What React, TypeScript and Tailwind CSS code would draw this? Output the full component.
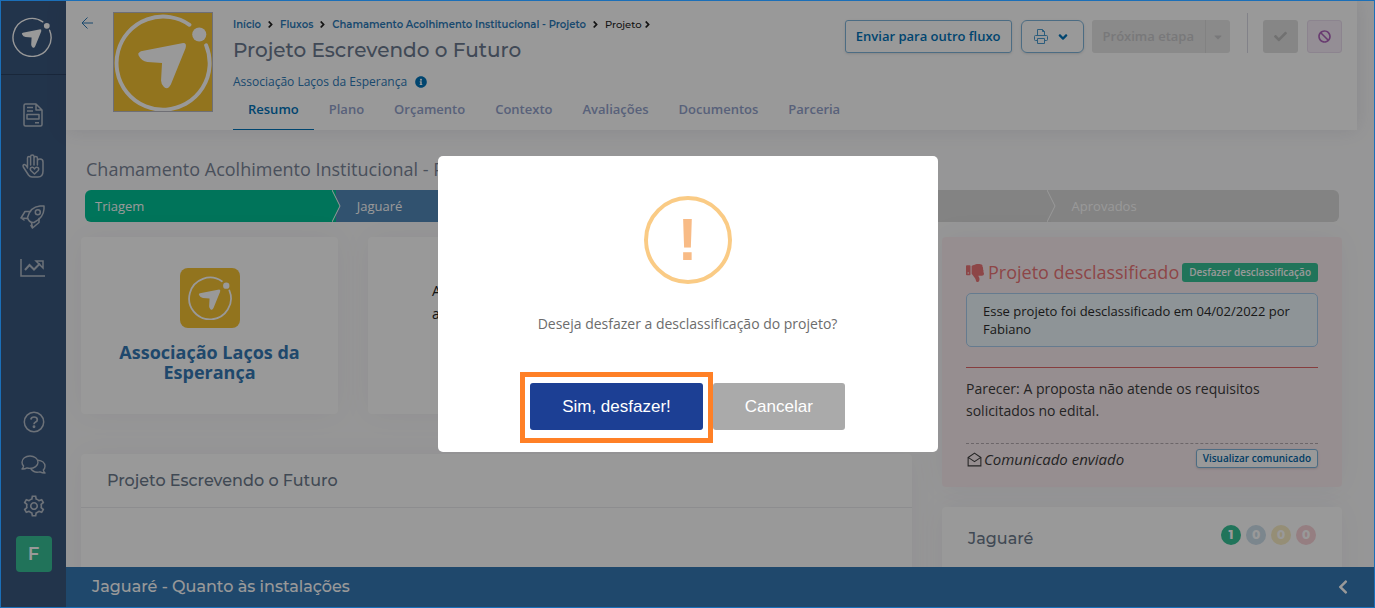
import { FaAngleDown, FaAngleRight, FaBan, FaCaretDown, FaCheck, FaChevronLeft, FaInfoCircle, FaThumbsDown } from "react-icons/fa"
import { LiaCogSolid, LiaEnvelopeOpen } from "react-icons/lia"

const montserrat = "font-['Montserrat','Inter',sans-serif]"

const tabs = ["Resumo", "Plano", "Orçamento", "Contexto", "Avaliações", "Documentos", "Parceria"]

const counters = [
  { value: 1, color: "bg-[#36c196]" },
  { value: 0, color: "bg-[#cddfec]" },
  { value: 0, color: "bg-[#f8edc5]" },
  { value: 0, color: "bg-[#f9d2d8]" },
]

function Logo({ className, thin }: { className: string; thin?: boolean }) {
  return (
    <svg viewBox="0 0 100 100" className={className} fill="none" aria-hidden="true">
      <path
        d="M77 12A47.500 47.500 0 1 0 94 33"
        stroke="currentColor"
        strokeWidth={thin ? 3.500 : 4}
        strokeLinecap="round"
      />
      <circle cx="87" cy="22" r="7.200" fill="currentColor" />
      <path
        d="M26 40Q27 39 30 38.500L68 31Q75 29 73 36L58 73Q55 79 51 75.500Q48 73 48 69L49 51L34 50Q28 49 25 43Q24 41 26 40Z"
        fill="currentColor"
      />
    </svg>
  )
}

function DocumentIcon() {
  return (
    <svg width="20" height="24" viewBox="0 0 20 24" fill="none" stroke="currentColor" strokeWidth="1.500" strokeLinejoin="round" aria-hidden="true">
      <path d="M1 2.500Q1 1 2.500 1H13L19 7V21.500Q19 23 17.500 23H2.500Q1 23 1 21.500ZM13 1V7H19" />
      <path d="M4 4.500H10M4 8H10M4 11.500H16V16H4ZM12 19.800H16" />
    </svg>
  )
}

function HandIcon() {
  return (
    <svg width="22" height="24" viewBox="0 0 22 24" fill="none" stroke="currentColor" strokeWidth="1.500" strokeLinejoin="round" strokeLinecap="round" aria-hidden="true">
      <path d="M5.500 14V4Q5.500 2.500 7 2.500T8.600 4V11M8.600 4V2.500Q8.600 1 10.300 1T12 2.500V11M12 4Q12 2.500 13.700 2.500T15.400 4V11M15.400 7Q15.400 5 18 5Q21 5 21 8V17Q21 23 16 23H10Q8 23 6.500 21L1.300 13Q.5 11 2.200 10.500Q3.500 10.200 5.500 13.500" />
      <path d="M12.500 20L8.800 16.500Q7.500 14.500 9.300 13.500Q11.300 12.700 12.500 15Q13.700 12.700 15.700 13.500Q17.500 14.500 16.200 16.500Z" />
    </svg>
  )
}

function RocketIcon() {
  return (
    <svg width="25" height="24" viewBox="0 0 25 24" fill="none" stroke="currentColor" strokeWidth="1.500" strokeLinejoin="round" strokeLinecap="round" aria-hidden="true">
      <path d="M7.500 12.500Q10 2 20 1H24V4Q23.500 13 14 17.500Q9 18 7.500 12.500Z" />
      <path d="M10.500 6.500H5L1 13L7.500 13.500M19 13.500V17.500L12.500 23L11.500 17.500M1 13L4 15M12.500 23L11 20.500" />
      <circle cx="17.800" cy="7.200" r="2.500" />
    </svg>
  )
}

function ChartIcon() {
  return (
    <svg width="25" height="18" viewBox="0 0 25 18" fill="none" stroke="currentColor" strokeWidth="1.500" aria-hidden="true">
      <path d="M1 0V17H25" />
      <path d="M5 11L9.500 6L14 10.500L20 4.500" strokeWidth="2" />
      <path d="M16 2H23V9L20 6L18 4Z" />
    </svg>
  )
}

function HelpIcon() {
  return (
    <svg width="22" height="22" viewBox="0 0 22 22" fill="none" stroke="currentColor" strokeWidth="1.500" aria-hidden="true">
      <circle cx="11" cy="11" r="9.700" />
      <path d="M7.800 8.500Q8.300 6 11 6Q14.300 6 14.300 8.700Q14.300 10.300 12.300 11.200Q11 11.800 11 13.300" strokeWidth="1.700" />
      <circle cx="11" cy="15.700" r=".7" fill="currentColor" />
    </svg>
  )
}

function ChatIcon() {
  return (
    <svg width="25" height="19" viewBox="0 0 25 19" fill="none" stroke="currentColor" strokeWidth="1.400" strokeLinejoin="round" strokeLinecap="round" aria-hidden="true">
      <path d="M1 14Q2.500 12.500 2.600 11Q1 9.500 1 7.200C1 3.700 4.600 1 9 1S17 3.700 17 7.200S13.400 13.400 9 13.400Q7.300 13.400 6 12.900Q3.800 14.200 1 14Z" />
      <path d="M17 5.200C21 5.500 24 8 24 11.200Q24 13.500 22.300 15Q22.500 16.500 24 18Q21.200 18 19 16.800Q13 18.500 9.700 13.500" />
    </svg>
  )
}

function PrinterIcon() {
  return (
    <svg width="14" height="15" viewBox="0 0 14 15" fill="none" stroke="currentColor" strokeWidth="1" aria-hidden="true">
      <path d="M3.500 6.500V.5H8.500L10.500 2.500V6.500M8.500 .5V2.500H10.500" />
      <path d="M3 11.500H1.500Q.5 11.500 .5 10.500V7.500Q.5 6.500 1.500 6.500H12.500Q13.500 6.500 13.500 7.500V10.500Q13.500 11.500 12.500 11.500H11M3.500 9.500H10.500V14.500H3.500Z" />
    </svg>
  )
}

function ArrowLeftIcon() {
  return (
    <svg width="12" height="12" viewBox="0 0 12 12" fill="none" stroke="currentColor" strokeWidth="1" aria-hidden="true">
      <path d="M6.500 .5L1 6L6.500 11.500M1 6H12" />
    </svg>
  )
}

function StepArrow({ color }: { color: string }) {
  return (
    <svg width="9" height="32" viewBox="0 0 9 32" className={"absolute -left-1 top-0 " + color} aria-hidden="true">
      <path d="M0 0L8 16L0 32Z" fill="currentColor" />
      <path d="M0 0L8 16L0 32" fill="none" stroke="#fff" />
    </svg>
  )
}

function Sidebar() {
  return (
    <aside className="flex w-[65px] shrink-0 flex-col items-center bg-[#3a577d] text-[#b4bdc9]">
      <a href="#inicio" aria-label="Início" className="flex h-[74px] w-full items-center justify-center border-b border-[#2a4162] pb-[2px] pr-1 text-white">
        <Logo thin className="size-10" />
      </a>
      <nav className="flex flex-col items-center gap-[27px] pr-[2px] pt-[28px]">
        <a href="#editais" aria-label="Editais" className="flex h-6 items-center"><DocumentIcon /></a>
        <a href="#doacoes" aria-label="Doações" className="flex h-6 items-center"><HandIcon /></a>
        <a href="#projetos" aria-label="Projetos" className="flex h-6 items-center"><RocketIcon /></a>
        <a href="#indicadores" aria-label="Indicadores" className="flex h-6 items-center"><ChartIcon /></a>
      </nav>
      <div className="mt-auto flex flex-col items-center gap-[18px] pb-9">
        <a href="#ajuda" aria-label="Ajuda" className="flex h-6 items-center"><HelpIcon /></a>
        <a href="#mensagens" aria-label="Mensagens" className="flex h-6 items-center"><ChatIcon /></a>
        <a href="#ajustes" aria-label="Ajustes" className="flex h-6 items-center"><LiaCogSolid size={26} /></a>
        <button className={"size-9 rounded bg-[#38c096] text-lg font-semibold text-white " + montserrat}>F</button>
      </div>
    </aside>
  )
}

function Breadcrumb() {
  return (
    <nav className={"flex h-4 items-center gap-1 text-[10px] font-semibold text-[#2c7ab8] " + montserrat}>
      <a href="#inicio">Início</a>
      <FaAngleRight size={11} className="text-[#222]" />
      <a href="#fluxos">Fluxos</a>
      <FaAngleRight size={11} className="text-[#222]" />
      <a href="#chamamento">Chamamento Acolhimento Institucional - Projeto</a>
      <FaAngleRight size={11} className="text-[#222]" />
      <span className="flex items-center font-medium text-[#222]">
        Projeto <FaAngleRight size={11} />
      </span>
    </nav>
  )
}

function Header() {
  return (
    <header className="mr-[18px] flex h-[129px] shrink-0 bg-white px-[15px] shadow-[0_0_20px_rgba(60,60,90,0.12)]">
      <a href="#voltar" aria-label="Voltar" className="mt-4 h-3 shrink-0 text-[#2c7ab8]">
        <ArrowLeftIcon />
      </a>
      <div className="ml-5 mt-[11px] size-[100px] shrink-0 border border-[#b9b9c4] bg-[#f4c133] text-white">
        <Logo className="size-full" />
      </div>
      <div className="ml-5 flex min-w-0 flex-1 flex-col whitespace-nowrap pt-[15px]">
        <Breadcrumb />
        <h1 className={"mt-1 text-xl leading-[28px] font-medium text-[#6c7a90] " + montserrat}>Projeto Escrevendo o Futuro</h1>
        <p className="mt-2 flex items-center gap-2 text-xs leading-[20px] text-[#2c7ab8]">
          <a href="#associacao">Associação Laços da Esperança</a>
          <FaInfoCircle size={12} className="text-[#0073ba]" />
        </p>
        <nav className="mt-auto flex">
          {tabs.map((tab, i) => (
            <a
              key={tab}
              href={"#" + tab.toLowerCase()}
              className={
                i === 0
                  ? "h-[38px] border-b border-[#0073ba] px-[15px] pt-2 text-[13px] font-semibold text-[#0073ba]"
                  : "h-[38px] px-[15px] pt-2 text-[13px] font-semibold text-[#93a2cc]"
              }
            >
              {tab}
            </a>
          ))}
        </nav>
      </div>
      <div className="mt-[19px] flex h-[33px] shrink-0 items-center whitespace-nowrap text-[13px] font-semibold">
        <button className="h-full rounded-[3px] border border-[#7fb5da] px-[10px] text-[#0073ba] shadow-sm">Enviar para outro fluxo</button>
        <button aria-label="Imprimir" className="ml-[9px] flex h-full w-[63px] items-center justify-center gap-2 rounded-md border border-[#7fb5da] text-[#0073ba] shadow-sm">
          <span className="text-[#4a9bd0]"><PrinterIcon /></span>
          <FaAngleDown size={14} />
        </button>
        <button disabled className="ml-2 h-full rounded-l-[3px] bg-[#e6e6e6] px-[11px] text-[#c9c9cb]">Próxima etapa</button>
        <button disabled aria-label="Mais etapas" className="flex h-full w-[25px] items-center justify-center rounded-r-[3px] border-l border-[#d9d9d9] bg-[#e6e6e6] text-[#c9c9cb]">
          <FaCaretDown size={12} />
        </button>
        <div className="mb-2 ml-[17px] mr-[15px] h-10 border-l border-[#d9d9e4]" />
        <button disabled aria-label="Aprovar" className="flex h-full w-[35px] items-center justify-center rounded-[3px] bg-[#e0e0e0] text-[#bdbdbd]">
          <FaCheck size={13} />
        </button>
        <button aria-label="Desclassificar" className="ml-[9px] flex h-full w-[35px] items-center justify-center rounded-[3px] border border-[#eaddee] bg-[#f7edf8] text-[#b065bd]">
          <FaBan size={13} />
        </button>
      </div>
    </header>
  )
}

function Steps() {
  return (
    <ol className="flex h-8 overflow-hidden rounded-md text-[13px] leading-[32px] text-white">
      <li className="w-1/5 bg-[#00c196] pl-[10px]">Triagem</li>
      <li className="relative flex-1 bg-[#5389b9] pl-[21px]">
        <StepArrow color="text-[#00c196]" />
        Jaguaré
      </li>
      <li className="flex-1 bg-[#dadada]" />
      <li className="relative w-[23%] bg-[#dadada] pl-[21px]">
        <StepArrow color="text-[#dadada]" />
        Aprovados
      </li>
    </ol>
  )
}

const card = "rounded bg-white shadow-[0_0_30px_rgba(82,63,105,0.06)]"

function Disqualified() {
  return (
    <section className="rounded bg-[#fbedf1] px-6 pb-4 pt-6 shadow-[0_0_30px_rgba(82,63,105,0.06)]">
      <div className="flex h-[23px] items-center justify-between whitespace-nowrap">
        <h3 className="flex items-center gap-1 text-[18px] text-[#ec7577]">
          <FaThumbsDown size={18} />
          Projeto desclassificado
        </h3>
        <button className="h-[19px] rounded-[3px] bg-[#36c196] px-[7px] text-[10px] font-semibold leading-[19px] text-white">
          Desfazer desclassificação
        </button>
      </div>
      <p className="mt-[9px] rounded-[5px] border border-[#a9cdee] bg-[#edf7fc] px-4 py-2 text-[13px] leading-[18px] text-[#2b2b2b]">
        Esse projeto foi desclassificado em 04/02/2022 por Fabiano
      </p>
      <hr className="mt-5 border-[#e06668]" />
      <p className="mt-[10px] text-sm leading-[22px] text-[#3c3c3c]">
        Parecer: A proposta não atende os requisitos solicitados no edital.
      </p>
      <div className="mt-[21px] flex h-[28px] items-start justify-between border-t border-dashed border-[#b5abb0] pt-[5px] text-[#3c3c3c]">
        <span className="flex items-center gap-px text-[15px] italic leading-[20px]">
          <LiaEnvelopeOpen size={17} className="stroke-current" />
          Comunicado enviado
        </span>
        <button className="h-[19px] rounded-[3px] border border-[#7fb5da] bg-white px-[6px] text-[10px] font-semibold leading-[17px] text-[#0065a8] shadow-sm">
          Visualizar comunicado
        </button>
      </div>
    </section>
  )
}

function ConfirmDialog() {
  return (
    <div className="fixed inset-0 flex items-center justify-center bg-black/40">
      <div role="dialog" aria-modal="true" className="flex h-[296px] w-[500px] flex-col items-center rounded-[5px] bg-white pt-10">
        <div className="flex size-[88px] items-center justify-center rounded-full border-4 border-[#facb85] font-['Liberation_Sans',Arial,sans-serif] text-[60px] font-bold leading-[80px] text-[#f8bb86]">!</div>
        <p className="mt-[29px] text-sm leading-[22px] text-[#6c6c6c]">Deseja desfazer a desclassificação do projeto?</p>
        <div className="mt-12 flex gap-[10px] font-['Liberation_Sans',Arial,sans-serif] text-[17px] text-white">
          <div className="relative">
            <button className="h-[47px] rounded-[3px] bg-[#1c3f94] px-8">Sim, desfazer!</button>
            <div className="pointer-events-none absolute -bottom-[13px] -left-[10px] -right-[10px] -top-[11px] border-[5px] border-[#ff8026]" />
          </div>
          <button className="h-[47px] rounded-[3px] bg-[#aaa] px-8">Cancelar</button>
        </div>
      </div>
    </div>
  )
}

export default function App() {
  return (
    <div className="relative flex h-screen overflow-hidden bg-[#fbfbfc] pl-px pt-px font-['Open_Sans',sans-serif]">
      <Sidebar />
      <div className="flex min-w-0 flex-1 flex-col">
        <Header />
        <main className="min-h-0 flex-1 overflow-hidden pl-[15px] pr-[33px]">
          <h2 className="ml-[5px] mt-6 text-lg leading-[30px] text-[#7a8598]">Chamamento Acolhimento Institucional - Projeto</h2>
          <div className="mt-[6px] pl-1 pr-[3px]">
            <Steps />
          </div>
          <div className="mt-[15px] flex gap-[30px]">
            <div className="min-w-0 flex-1">
              <div className="grid h-[177px] grid-cols-3 gap-[30px]">
                <section className={"flex flex-col items-center px-6 pt-[31px] text-center " + card}>
                  <div className="flex size-[60px] items-center justify-center rounded-lg bg-[#f4c133] text-white">
                    <Logo className="size-11" />
                  </div>
                  <h3 className="mt-[14px] text-lg font-bold leading-[20px] text-[#3478b4]">Associação Laços da Esperança</h3>
                </section>
                <section className={"px-16 pt-[42px] text-sm leading-[23px] text-[#222] " + card}>
                  <p>A<br />a</p>
                </section>
                <section className={card} />
              </div>
              <section className={"mt-10 h-60 " + card}>
                <h3 className={"h-[54px] border-b border-[#ebebee] pl-[26px] text-base leading-[53px] font-medium text-[#6c7a8c] " + montserrat}>Projeto Escrevendo o Futuro</h3>
              </section>
            </div>
            <div className="flex w-[400px] shrink-0 flex-col gap-5">
              <Disqualified />
              <section className={"flex h-60 items-start justify-between px-[26px] pt-[18px] " + card}>
                <h3 className={"pt-[2px] text-base leading-[24px] font-medium text-[#6c7a8c] " + montserrat}>Jaguaré</h3>
                <div className="flex gap-[5px]">
                  {counters.map((counter, i) => (
                    <span key={i} className={"flex size-5 items-center justify-center rounded-full text-xs font-extrabold text-white " + montserrat + " " + counter.color}>
                      {counter.value}
                    </span>
                  ))}
                </div>
              </section>
            </div>
          </div>
        </main>
        <footer className="flex h-[41px] shrink-0 items-center justify-between bg-[#3478b4] pb-[2px] pl-[26px] pr-6 text-white">
          <span className={"text-base font-medium " + montserrat}>Jaguaré - Quanto às instalações</span>
          <button aria-label="Expandir"><FaChevronLeft size={16} /></button>
        </footer>
      </div>
      <ConfirmDialog />
      <div className="pointer-events-none fixed inset-0 border border-[#1b6fb8]" />
    </div>
  )
}
